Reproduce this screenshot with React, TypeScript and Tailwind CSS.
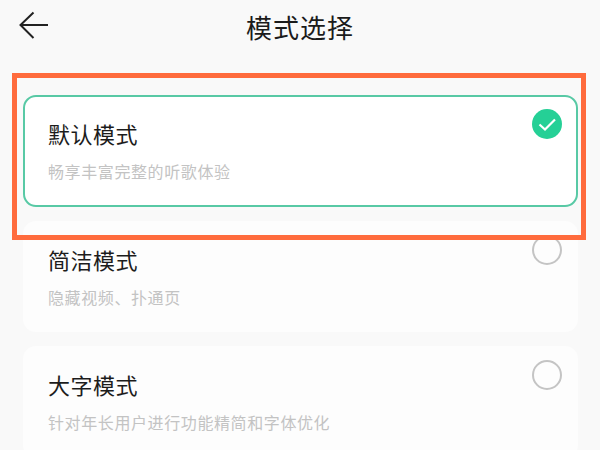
const cjk = "font-['Noto_Sans_CJK_SC','Noto_Sans',sans-serif]";

function Radio() {
  return <span className="block w-[30px] h-[30px] rounded-full border-2 border-[#c4c4c4]" />;
}

function Check() {
  return (
    <svg width="30" height="30" viewBox="0 0 30 30" className="block">
      <circle cx="15" cy="15" r="15" fill="#25d096" />
      <path d="M7.5 15.5L13 20.5L23 10.5" fill="none" stroke="#fff" strokeWidth="2.2" />
    </svg>
  );
}

function Card({ title, sub, selected, className }: { title: string; sub: string; selected?: boolean; className: string }) {
  return (
    <div className={`flex justify-between items-start ml-[23px] mr-[22px] rounded-[13px] border-2 pl-[23px] pr-[14px] ${selected ? "border-[#58c9a5] bg-white" : "border-transparent bg-[#fdfdfd]"} ${className}`}>
      <div className="pt-[21px]">
        <div className="text-[22px] leading-[30px] tracking-[0.5px] text-[#1c1c1c]">{title}</div>
        <div className="mt-[11px] text-[16px] leading-[24px] tracking-[0.6px] text-[#c3c3c3]">{sub}</div>
      </div>
      <div className="pt-[12px]">{selected ? <Check /> : <Radio />}</div>
    </div>
  );
}

export default function App() {
  return (
    <div className={`relative w-[600px] h-[450px] overflow-hidden bg-[#f9f9f9] ${cjk}`}>
      <header className="relative h-[52px] pt-[11px] pl-[18px]">
        <svg width="32" height="30" viewBox="0 0 32 30" className="block">
          <path d="M30 14H2.5M15.5 1.5L2.5 14L15.5 27" fill="none" stroke="#222" strokeWidth="2" />
        </svg>
        <h1 className="absolute left-0 right-0 top-[8px] text-center text-[26px] leading-[38px] font-normal tracking-[1px] text-[#1b1b1b]">模式选择</h1>
      </header>
      <main className="pt-[43px]">
        <Card title="默认模式" sub="畅享丰富完整的听歌体验" selected className="h-[112px] mb-[14px]" />
        <Card title="简洁模式" sub="隐藏视频、扑通页" className="h-[111px] mb-[14px]" />
        <Card title="大字模式" sub="针对年长用户进行功能精简和字体优化" className="h-[112px]" />
      </main>
      <div className="absolute left-[12px] top-[73px] w-[574px] h-[167px] border-[5px] border-[#ff6b3d]" />
    </div>
  );
}
